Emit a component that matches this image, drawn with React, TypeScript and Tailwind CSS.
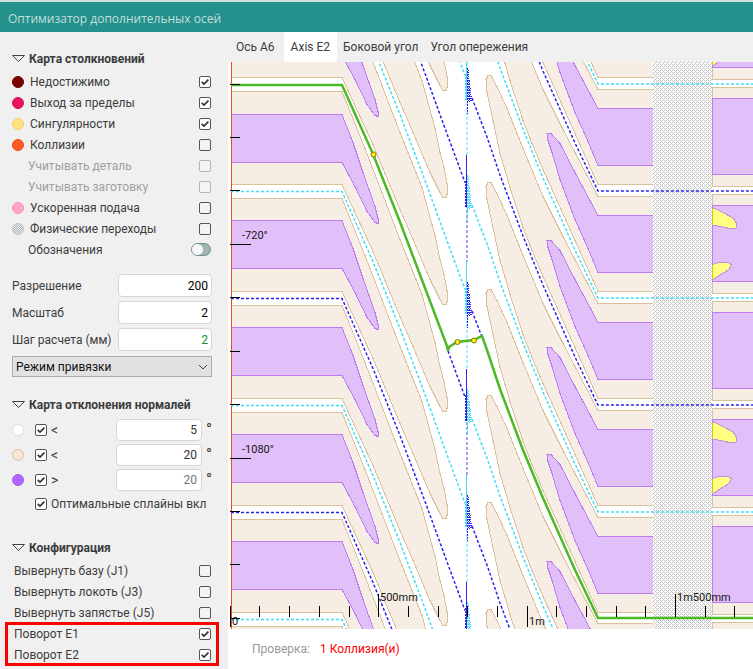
import React, { useState } from "react";

type Point = [number, number];

// distance between two neighbouring turns of the axis on the map
const STEP = 107;

const leftLine: Point[] = [[342, 0], [373, 70], [400, 137], [425, 203], [448, 266], [465, 312]];
const rightLine: Point[] = [[472, -307], [487, -268], [500, -230], [523, -169], [543, -120], [575, -48], [598, 0]];

const leftBeige: Point[] = [
  [231, -7], [342, -7], [373, 60], [400, 125], [413, 155], [430, 195], [440, 215], [443, 220], [446, 220], [447, 217],
  [447, 206], [444, 190], [440, 175], [435, 151], [422, 103], [400, 48], [382, 1], [365, -43], [342, -100], [231, -100],
];
const leftPurple: Point[] = [
  [231, 30], [342, 30], [353, 58], [363, 88], [375, 122], [378, 134], [378, 139], [375, 138], [367, 127], [355, 102], [342, 78], [231, 78],
];
const rightBeige: Point[] = [
  [653, 5], [598, 5], [563, -62], [543, -102], [523, -150], [507, -190], [497, -212], [491, -223], [488, -223], [486, -219],
  [487, -206], [493, -178], [500, -145], [510, -111], [523, -71], [532, -48], [543, -22], [575, 49], [598, 100], [653, 100],
];
const rightPurple: Point[] = [
  [653, 25], [598, 25], [575, -18], [560, -47], [551, -57], [547, -57], [548, -50], [552, -38], [560, -11], [575, 29], [588, 58], [598, 82], [653, 82],
];

const greenLine: Point[] = [
  [231, 85], [342, 85], [373, 154], [400, 222], [425, 288], [447, 346], [448, 351], [449, 347], [457, 342], [474, 340],
  [482, 336], [487, 350], [500, 389], [523, 450], [543, 498], [575, 570], [598, 618], [753, 618],
];

const toPoints = (points: Point[], y: number) => points.map(([px, py]) => `${px},${py + y}`).join(" ");

const leftRows = [-3, -2, -1, 0, 1, 2, 3, 4, 5];
const rightRows = [-6, -5, -4, -3, -2, -1, 0, 1, 2, 3];
const yTicks = [84, 137, 190, 244, 297, 351, 404, 458, 511, 564, 618];
const xTicks = [259, 289, 319, 349, 408, 438, 467, 497, 556, 586, 616, 645, 705, 734];

const lineColor = (row: number) => (row % 2 === 0 ? "#2b22f0" : "#3fdcf7");

// the narrow place in the middle where the lines of both sides meet
const Knot = ({ y, main, side }: { y: number; main: string; side: string }) => (
  <g fill="none">
    <path d={`M466.5 ${y}V${y + 52}`} stroke={main} />
    <path d={`M465.5 ${y + 26}V${y + 52}`} stroke={main} strokeDasharray="2 1" />
    <path d={`M467.5 ${y + 20}V${y + 66}`} stroke={side} strokeDasharray="2 1" />
    <path d={`M468.5 ${y + 22}V${y + 54}`} stroke={side} strokeDasharray="1 1" />
    <path d={`M469.5 ${y + 32}V${y + 54}`} stroke={side} strokeDasharray="2 1" />
    <path d={`M470.5 ${y + 40}V${y + 54}M471.5 ${y + 48}V${y + 54}`} stroke={side} strokeDasharray="1 1" />
  </g>
);

const AxisMap = () => {
  return (
    <svg
      viewBox="228 62 525 567"
      preserveAspectRatio="xMinYMin slice"
      className="block w-full bg-white"
      role="img"
      aria-label="Axis E2"
    >
      <defs>
        <pattern id="hatch" width="4" height="4" patternUnits="userSpaceOnUse">
          <path d="M0 0h1v1h-1zM2 0h1v1h-1zM1 1h1v1h-1zM0 2h1v1h-1zM2 2h1v1h-1zM3 3h1v1h-1z" fill="#c4c4c4" />
        </pattern>
      </defs>

      <g shapeRendering="crispEdges">
        <g fill="#f6ede4" stroke="#dcc09a">
          {leftRows.map((row) => (
            <polygon key={row} points={toPoints(leftBeige, 84.5 + row * STEP)} />
          ))}
          <polygon points={toPoints(leftBeige, 84.5 + 6 * STEP)} />
          {rightRows.map((row) => (
            <polygon key={row} points={toPoints(rightBeige, (row < 0 ? 619.5 : 618.5) + row * STEP)} />
          ))}
          {rightRows.map((row) => (
            <rect key={row} x="712.5" y={622.5 + row * STEP} width="50" height="99" />
          ))}
        </g>
        <g fill="#e1c0fa" stroke="#bd7df0">
          {leftRows.map((row) => (
            <polygon key={row} points={toPoints(leftPurple, (row > 0 ? 83.5 : 84.5) + row * STEP)} />
          ))}
          {rightRows.map((row) => (
            <polygon key={row} points={toPoints(rightPurple, 618.5 + row * STEP)} />
          ))}
          {rightRows.map((row) => (
            <rect key={row} x="712.5" y={633.5 + row * STEP} width="50" height="76" />
          ))}
        </g>

        {[-214, 0, 214].map((y) => (
          <g key={y} fill="#ffff82" stroke="#c48be0" transform={`translate(0 ${y})`}>
            <path d="M712.5 207.5L724 213L733 218L737 224L736 228L732 229L723 227L712.5 225" />
            <path d="M712.5 264.5L720 262L728 262L732 265L728 270L720 275L712.5 280" />
            <path d="M712.5 208V225M712.5 265V279" stroke="#d2c60a" />
          </g>
        ))}

        <rect x="653" y="62" width="59" height="567" fill="#ffffff" />
        <rect x="653" y="62" width="59" height="567" fill="url(#hatch)" />
        <path d="M231.5 62V629" stroke="#f04a10" />
      </g>

      <g fill="none" strokeWidth="1.5" strokeDasharray="3 2">
        {leftRows.filter((row) => row !== 0).map((row) => (
          <polyline key={row} points={toPoints([[231, 0], ...leftLine], 84.5 + row * STEP)} stroke={lineColor(row)} />
        ))}
        {rightRows.filter((row) => row !== 0).map((row) => (
          <polyline key={row} points={toPoints([...rightLine, [753, 0]], 619 + row * STEP)} stroke={lineColor(row)} />
        ))}
        <path d="M448 351L465 397M472 311L482 337" stroke="#2b22f0" />
      </g>

      <g shapeRendering="crispEdges">
        <path d="M467 62V155M467 315V369M467 529V582" stroke="#a5eefb" strokeWidth="2" strokeDasharray="3 2" />
        <path d="M467 205V262M467 422V475" stroke="#a59ff8" strokeWidth="2" strokeDasharray="3 2" />
        {[48, 262, 475].map((y) => (
          <Knot key={y} y={y} main="#3fdcf7" side="#2b22f0" />
        ))}
        {[155, 369, 582].map((y) => (
          <Knot key={y} y={y} main="#2b22f0" side="#3fdcf7" />
        ))}
      </g>

      <polyline points={toPoints(greenLine, 0)} fill="none" stroke="#4cba24" strokeWidth="2.5" />
      <g fill="#fff200" stroke="#77751b">
        <circle cx="373.5" cy="154.5" r="2.5" />
        <circle cx="457.5" cy="342" r="2.5" />
        <circle cx="474" cy="340.5" r="2.5" />
      </g>

      <g stroke="#000000" shapeRendering="crispEdges">
        {yTicks.map((y) => (
          <path key={y} d={`M230 ${y + 0.5}H${y === 244 || y === 458 ? 251 : 240}`} />
        ))}
        {xTicks.map((x) => (
          <path key={x} d={`M${x + 0.5} 606V617`} />
        ))}
        <path d="M230.5 606V627M378.5 594V617M527.5 606V627M675.5 594V617" />
      </g>
      <g fill="#151515" className="font-['Roboto'] text-[11px]">
        <text x="242" y="239">-720°</text>
        <text x="242" y="453">-1080°</text>
        <text x="232" y="625">0</text>
        <text x="380" y="601">500mm</text>
        <text x="529" y="625">1m</text>
        <text x="677" y="601">1m500mm</text>
      </g>
    </svg>
  );
};

const Box = ({ id, defaultChecked, disabled }: { id: string; defaultChecked?: boolean; disabled?: boolean }) => (
  <span className="relative block h-3 w-3 shrink-0">
    <input
      id={id}
      type="checkbox"
      defaultChecked={defaultChecked}
      disabled={disabled}
      className="peer block h-3 w-3 appearance-none rounded-[2px] border border-[#555555] bg-[#f4f4f4] checked:bg-white disabled:border-[#b4b4b4]"
    />
    <svg viewBox="0 0 12 12" className="pointer-events-none absolute inset-0 hidden h-3 w-3 peer-checked:block" aria-hidden="true">
      <path d="M2.7 5.8L5 8.1L9.4 3.7" fill="none" stroke="#333333" strokeWidth="1.7" />
    </svg>
  </span>
);

const SectionTitle = ({ children }: { children: React.ReactNode }) => (
  <h2 className="flex h-6 items-center gap-1 font-bold">
    <svg viewBox="0 0 13 8" className="h-2 w-[13px]" aria-hidden="true">
      <path d="M0.5 0.5H12.5L6.5 6.5Z" fill="none" stroke="#444444" />
    </svg>
    {children}
  </h2>
);

const collisions = [
  { id: "unreachable", label: "Недостижимо", dot: "bg-[#7d0000] border-[#6a0000]", checked: true },
  { id: "limits", label: "Выход за пределы", dot: "bg-[#e8155e] border-[#d81456]", checked: true },
  { id: "singular", label: "Сингулярности", dot: "bg-[#ffe07c] border-[#f5d064]", checked: true },
  { id: "collision", label: "Коллизии", dot: "bg-[#ff5a26] border-[#f04a10]" },
  { id: "part", label: "Учитывать деталь", disabled: true },
  { id: "workpiece", label: "Учитывать заготовку", disabled: true },
  { id: "rapid", label: "Ускоренная подача", dot: "bg-[#ffa8c6] border-[#f58fb2]" },
  { id: "physical", label: "Физические переходы", hatch: true },
];

const settings = [
  { id: "resolution", label: "Разрешение", value: "200", color: "text-black" },
  { id: "scale", label: "Масштаб", value: "2", color: "text-black" },
  { id: "step", label: "Шаг расчета (мм)", value: "2", color: "text-[#168a2c]" },
];

const normals = [
  { id: "normal-white", sign: "<", value: "5", dot: "bg-white border-[#dddddd]", color: "text-[#333333]" },
  { id: "normal-beige", sign: "<", value: "20", dot: "bg-[#f8e6d5] border-[#d8c4b0]", color: "text-[#333333]" },
  { id: "normal-purple", sign: ">", value: "20", dot: "bg-[#b266ff] border-[#a35aee]", color: "text-[#777777]" },
];

const flips = [
  { id: "j1", label: "Вывернуть базу (J1)" },
  { id: "j3", label: "Вывернуть локоть (J3)" },
  { id: "j5", label: "Вывернуть запястье (J5)" },
];

const turns = [
  { id: "e1", label: "Поворот E1" },
  { id: "e2", label: "Поворот E2" },
];

const tabs = ["Ось A6", "Axis E2", "Боковой угол", "Угол опережения"];

const Sidebar = () => {
  return (
    <aside className="w-[228px] shrink-0 bg-[#f0f0f0] pt-[15px] pr-4 pl-3 text-[#3c3c3c]">
      <section>
        <SectionTitle>Карта столкновений</SectionTitle>
        {collisions.map((item) => (
          <div key={item.id} className="flex h-[21px] items-center pr-px">
            {item.dot && <span className={`mr-1.5 h-3 w-3 rounded-full border ${item.dot}`} />}
            {item.hatch && (
              <svg viewBox="0 0 12 12" className="mr-1.5 h-3 w-3" aria-hidden="true">
                <defs>
                  <pattern id="dots" width="2" height="2" patternUnits="userSpaceOnUse">
                    <path d="M0 0h1v1h-1zM1 1h1v1h-1z" fill="#b0b0b0" />
                  </pattern>
                </defs>
                <circle cx="6" cy="6" r="5.5" fill="url(#dots)" stroke="#c4c4c4" />
              </svg>
            )}
            <label htmlFor={item.id} className={item.disabled ? "grow pl-4 text-[#a0a0a0]" : "grow"}>
              {item.label}
            </label>
            <Box id={item.id} defaultChecked={item.checked} disabled={item.disabled} />
          </div>
        ))}
        <div className="flex h-[21px] items-center justify-between pr-px pl-4">
          <label htmlFor="legend">Обозначения</label>
          <span className="relative block h-[13px] w-5">
            <input
              id="legend"
              type="checkbox"
              role="switch"
              className="peer block h-[13px] w-5 appearance-none rounded-full border border-[#6f8f8c] bg-[#9fb5b3]"
            />
            <span className="pointer-events-none absolute top-px left-px h-[11px] w-[11px] rounded-full bg-[#f7f7f7] peer-checked:left-2" />
          </span>
        </div>
      </section>

      <section className="mt-3.5 flex flex-col gap-1">
        {settings.map((item) => (
          <div key={item.id} className="flex h-[23px] items-center justify-between">
            <label htmlFor={item.id} className="whitespace-nowrap">{item.label}</label>
            <input
              id={item.id}
              type="text"
              defaultValue={item.value}
              className={`h-[23px] w-[94px] rounded border border-[#d6d6d6] bg-white px-[3px] text-right ${item.color}`}
            />
          </div>
        ))}
        <div className="relative mt-px">
          <select
            aria-label="Режим привязки"
            className="block h-[21px] w-full appearance-none border border-[#ababab] bg-[#e1e1e1] px-[3px] text-[#111111]"
          >
            <option>Режим привязки</option>
          </select>
          <svg viewBox="0 0 10 6" className="pointer-events-none absolute top-2 right-1 h-1.5 w-2.5" aria-hidden="true">
            <path d="M1 1L5 5L9 1" fill="none" stroke="#444444" />
          </svg>
        </div>
      </section>

      <section className="mt-4">
        <SectionTitle>Карта отклонения нормалей</SectionTitle>
        {normals.map((item) => (
          <div key={item.id} className="flex h-[25px] items-center">
            <span className={`mr-[11px] h-3 w-3 rounded-full border ${item.dot}`} />
            <Box id={item.id} defaultChecked />
            <label htmlFor={item.id} className="ml-1 grow text-sm">{item.sign}</label>
            <input
              type="text"
              aria-label={`${item.sign} ${item.value}°`}
              defaultValue={item.value}
              className={`h-[22px] w-[86px] rounded border border-[#d6d6d6] bg-white px-1 text-right ${item.color}`}
            />
            <span className="w-2.5 pl-1 text-base leading-5">°</span>
          </div>
        ))}
        <div className="flex h-6 items-center gap-1 pl-[23px] whitespace-nowrap">
          <Box id="splines" defaultChecked />
          <label htmlFor="splines">Оптимальные сплайны вкл</label>
        </div>
      </section>

      <section className="mt-5">
        <SectionTitle>Конфигурация</SectionTitle>
        {flips.map((item) => (
          <div key={item.id} className="flex h-[21px] items-center justify-between pr-px pl-0.5">
            <label htmlFor={item.id}>{item.label}</label>
            <Box id={item.id} />
          </div>
        ))}
        <div className="-mr-1.5 -ml-1.5 pr-[7px] pl-2 outline-3 -outline-offset-2 outline-[#ff0000]">
          {turns.map((item) => (
            <div key={item.id} className="flex h-[21px] items-center justify-between">
              <label htmlFor={item.id}>{item.label}</label>
              <Box id={item.id} defaultChecked />
            </div>
          ))}
        </div>
      </section>
    </aside>
  );
};

const App = () => {
  const [activeTab, setActiveTab] = useState("Axis E2");

  return (
    <div className="flex min-h-screen flex-col bg-white font-['Roboto',sans-serif] text-xs leading-4">
      <header className="flex h-8 items-center border-t-2 border-[#d4dcdc] bg-[#24918c] px-2 pt-1 font-['Open_Sans',sans-serif] text-[#c3dfdd]">
        <h1>Оптимизатор дополнительных осей</h1>
      </header>
      <div className="flex grow">
        <Sidebar />
        <main className="min-w-0 grow">
          <nav className="flex h-[30px] bg-[#f0f0f0] text-[#3c3c3c]">
            {tabs.map((tab) => (
              <button
                key={tab}
                type="button"
                onClick={() => setActiveTab(tab)}
                className={tab === activeTab ? "bg-white px-[7px]" : "px-1.5 first:pl-2 first:pr-[9px]"}
              >
                {tab}
              </button>
            ))}
          </nav>
          <AxisMap />
          <p className="flex gap-2.5 px-6 py-3">
            <span className="text-[#999999]">Проверка:</span>
            <span className="text-[#ff0000]">1 Коллизия(и)</span>
          </p>
        </main>
      </div>
    </div>
  );
};

export default App;
